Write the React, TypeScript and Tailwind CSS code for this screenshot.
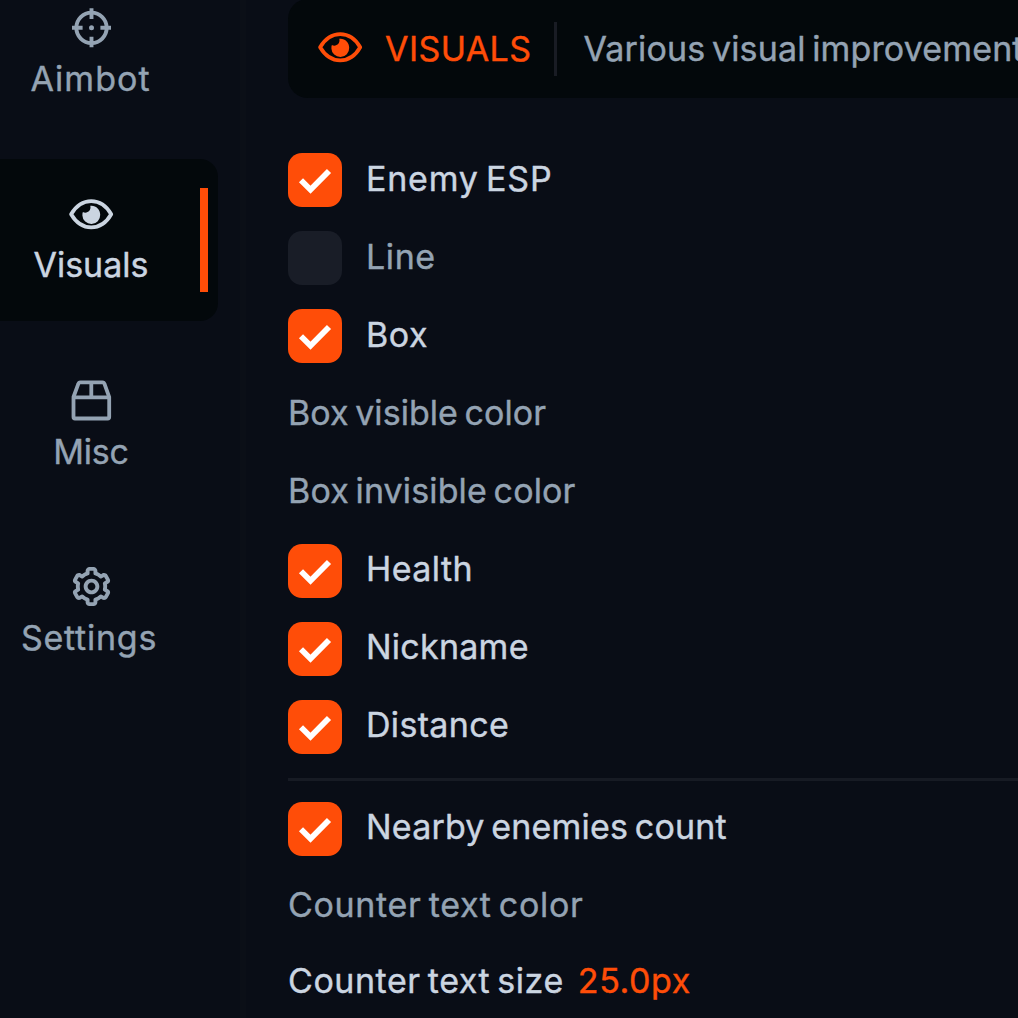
import type { ComponentType, ReactNode } from "react";
import { BiCog } from "react-icons/bi";

type IconProps = { className?: string };

function EyeIcon({ className }: IconProps) {
  return (
    <svg viewBox="0 0 47 47" className={className} fill="none" stroke="currentColor" strokeWidth="3.8" strokeLinejoin="round">
      <path d="M3.1 24.2C8 16 15 11.1 23.2 11.1S38.5 16 43.2 24.2C38.5 32.4 31.6 37.3 23.2 37.3S8 32.4 3.1 24.2Z" />
      <path
        d="M22.3 15.8C27.9 15.1 32.2 19.6 32.2 24.8A8.9 8.9 0 0 1 14.4 25.4C14.3 24.2 14.5 23.1 14.9 22.1C18.8 24 23.5 20.8 22.3 15.8Z"
        fill="currentColor"
        stroke="none"
      />
    </svg>
  );
}

function CrosshairIcon({ className }: IconProps) {
  return (
    <svg viewBox="0 0 47 47" className={className} fill="none" stroke="currentColor" strokeWidth="3.9">
      <circle cx="23.5" cy="23.8" r="15.2" />
      <path d="M23.5 4.3V14.9M23.5 32.7V43.3M4 23.8H14.6M32.4 23.8H43" />
      <circle cx="23.5" cy="23.8" r="2.5" fill="currentColor" stroke="none" />
    </svg>
  );
}

function PackageIcon({ className }: IconProps) {
  return (
    <svg viewBox="0 0 47 47" className={className} fill="none" stroke="currentColor" strokeWidth="3.8">
      <path d="M5.5 20L10.3 7q.5-1.6 2-1.6H34.5q1.5 0 2 1.6L41.2 20V40q0 1.5-1.5 1.5H7q-1.5 0-1.5-1.5Z" />
      <path d="M5.5 20.3H41.2M23.3 5.5V20.3" />
    </svg>
  );
}

type NavItem = { label: string; icon: ComponentType<IconProps>; tracking: string; active?: boolean };

const navItems: NavItem[] = [
  { label: "Aimbot", icon: CrosshairIcon, tracking: "-ml-px tracking-[1.03px]" },
  { label: "Visuals", icon: EyeIcon, tracking: "tracking-[0px]", active: true },
  { label: "Misc", icon: PackageIcon, tracking: "tracking-[-0.2px]" },
  { label: "Settings", icon: BiCog, tracking: "-ml-1 tracking-[0.75px]" },
];

function NavButton({ label, icon: Icon, tracking, active }: NavItem) {
  return (
    <button
      className={`relative flex h-[162px] w-[218px] shrink-0 flex-col items-center rounded-r-[18px] pt-[31px] pr-9 ${
        active ? "bg-[#03080b] text-[#cbd5e1]" : "text-[#94a3b3]"
      }`}
    >
      <Icon className="size-[47px]" />
      <span className={`mt-[7px] whitespace-nowrap leading-[42px] ${tracking}`}>{label}</span>
      {active && <span className="absolute top-[29px] right-[10px] h-[104px] w-2 bg-[#ff4d08]" />}
    </button>
  );
}

function Row({ children }: { children: ReactNode }) {
  return <div className="flex h-[54px] shrink-0 items-center whitespace-nowrap">{children}</div>;
}

function CheckRow({ label, tracking, checked = true }: { label: string; tracking: string; checked?: boolean }) {
  return (
    <Row>
      <span
        className={`flex size-[54px] shrink-0 items-center justify-center rounded-[14px] ${
          checked ? "bg-[#ff4d08]" : "bg-[#191d27]"
        }`}
      >
        {checked && (
          <svg viewBox="0 0 54 54" className="size-[54px]" fill="none" stroke="white" strokeWidth="5.8">
            <path d="M13 27.3L22.5 36.7L41 18" />
          </svg>
        )}
      </span>
      <span className={`ml-6 pb-[3.6px] leading-[42px] ${tracking} ${checked ? "text-[#cbd5e1]" : "text-[#94a3b3]"}`}>
        {label}
      </span>
    </Row>
  );
}

function ColorRow({ label, tracking }: { label: string; tracking: string }) {
  return (
    <Row>
      <span className={`pb-[3.6px] leading-[42px] text-[#94a3b3] ${tracking}`}>{label}</span>
    </Row>
  );
}

export default function App() {
  return (
    <div className="flex h-[1018px] w-[1018px] overflow-hidden bg-[#090d16] font-['Inter',sans-serif] text-[34px] [-webkit-text-stroke:0.4px_currentColor] [word-spacing:-3px]">
      <aside className="-mt-[27px] flex w-[246px] shrink-0 flex-col gap-[24.4px] border-r-[6px] border-[#0b0f17]">
        {navItems.map((item) => (
          <NavButton key={item.label} {...item} />
        ))}
      </aside>

      <main className="-mt-px flex min-w-0 flex-1 flex-col pl-[42px]">
        <header className="flex h-[99px] w-[900px] shrink-0 items-center whitespace-nowrap rounded-l-[20px] bg-[#03080b] pl-[28.6px]">
          <EyeIcon className="mb-[5px] size-[47px] shrink-0 text-[#ff4d08]" />
          <h1 className="ml-[21.5px] tracking-[0.4px] text-[#ff4d08]">VISUALS</h1>
          <span className="ml-[23px] h-[54px] w-[3px] shrink-0 bg-[#191c24]" />
          <p className="ml-[26px] tracking-[0.14px] text-[#94a3b3]">Various visual improvements</p>
        </header>

        <section className="mt-[55.3px] flex flex-col gap-[24.1px]">
          <CheckRow label="Enemy ESP" tracking="tracking-[0.8px]" />
          <CheckRow label="Line" tracking="tracking-[0.6px]" checked={false} />
          <CheckRow label="Box" tracking="tracking-[0.6px]" />
          <ColorRow label="Box visible color" tracking="tracking-[0.05px]" />
          <ColorRow label="Box invisible color" tracking="tracking-[0.13px]" />
          <CheckRow label="Health" tracking="tracking-[0.45px]" />
          <CheckRow label="Nickname" tracking="tracking-[0.25px]" />
          <CheckRow label="Distance" tracking="tracking-[0.33px]" />
          <div className="-mb-[3px] h-[3px] w-[900px] bg-[#171b24]" />
          <CheckRow label="Nearby enemies count" tracking="tracking-[0.18px]" />
          <ColorRow label="Counter text color" tracking="tracking-[0.67px]" />
          <div className="-mt-[3px]">
            <Row>
              <span className="pb-[3.6px] leading-[42px] tracking-[0.55px] text-[#cbd5e1]">Counter text size</span>
              <span className="ml-[14px] pb-[3.6px] leading-[42px] tracking-[0.6px] text-[#ff4d08]">25.0px</span>
            </Row>
          </div>
        </section>
      </main>
    </div>
  );
}
